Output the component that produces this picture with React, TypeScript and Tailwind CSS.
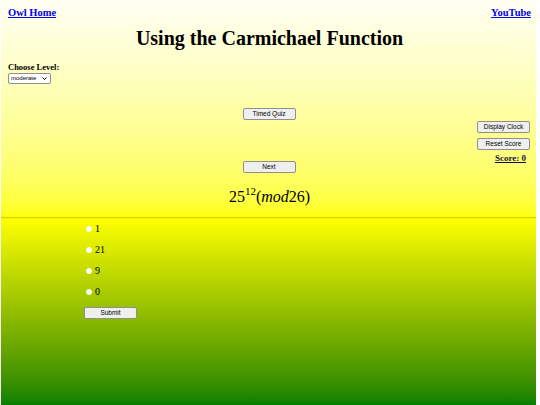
import { useState } from 'react'

const options = ['1', '21', '9', '0']

const serif = 'font-["Liberation_Serif","Times_New_Roman",serif]'

function SmallButton({ label, className = '' }: { label: string; className?: string }) {
  return (
    <button
      type="button"
      className={`block h-[12px] w-[53px] rounded-[2px] border border-[#8f8f8f] bg-[#efefef] font-['Liberation_Sans',Arial,sans-serif] text-[6.5px] leading-none text-black ${className}`}
    >
      {label}
    </button>
  )
}

export default function App() {
  const [level, setLevel] = useState('moderate')
  const [answer, setAnswer] = useState<string | null>(null)

  return (
    <div className="flex h-[405px] w-full bg-white pl-[1px] pr-[4px]">
      <div className={`flex flex-1 flex-col ${serif}`}>
        <section className="h-[217px] bg-gradient-to-b from-[#fffff4] to-[#ffff00] pl-[7px] pr-[5px] pt-[7px]">
          <div className="flex items-center justify-between text-[10.5px] font-bold leading-[12px]">
            <a href="#" className="text-[#0000ee] underline">Owl Home</a>
            <a href="#" className="text-[#0000ee] underline">YouTube</a>
          </div>

          <h1 className="mt-[7px] text-center text-[20px] font-bold leading-[24px] text-black">
            Using the Carmichael Function
          </h1>

          <div className="mt-[11px] text-[8.5px] font-bold leading-[12px] text-black">Choose Level:</div>
          <div className="relative h-[11px] w-[43px]">
            <select
              value={level}
              onChange={event => setLevel(event.target.value)}
              className="block h-[11px] w-[43px] appearance-none rounded-[2px] border border-[#8f8f8f] bg-white py-0 pl-[2px] pr-[10px] font-['Liberation_Sans',Arial,sans-serif] text-[6px] leading-[9px] text-black"
            >
              <option value="easy">easy</option>
              <option value="moderate">moderate</option>
              <option value="hard">hard</option>
            </select>
            <svg
              viewBox="0 0 10 6"
              className="pointer-events-none absolute right-[4px] top-[4px] h-[3px] w-[5px]"
            >
              <path d="M1 1l4 4 4-4" fill="none" stroke="#000" strokeWidth="2" />
            </svg>
          </div>

          <div className="mt-[24px] grid grid-cols-[1fr_auto_1fr]">
            <div />
            <div className="flex flex-col items-center">
              <SmallButton label="Timed Quiz" className="ml-[-1px]" />
              <SmallButton label="Next" className="ml-[-1px] mt-[41px]" />
              <div className="mt-[14px] flex items-start whitespace-nowrap text-[16px] leading-[20px] text-black">
                <span>25</span>
                <span className="mt-[-1px] text-[11px] leading-[11px]">12</span>
                <span>(</span>
                <span className="italic">mod</span>
                <span>26)</span>
              </div>
            </div>
            <div className="mr-[1px] flex flex-col items-end pt-[13px]">
              <SmallButton label="Display Clock" />
              <SmallButton label="Reset Score" className="mt-[5px]" />
              <a href="#" className="mt-[2px] mr-[4px] text-[9px] font-bold leading-[12px] text-[#12124a] underline">
                Score: 0
              </a>
            </div>
          </div>
        </section>

        <div className="h-[2px] border-t border-[#d2d200] bg-[#f4f400]" />

        <section className="flex-1 bg-gradient-to-b from-[#ffff00] to-[#008000] pl-[83px]">
          <div className="mt-[-1px] flex flex-col">
            {options.map(option => (
              <label key={option} className="flex h-[21px] items-center gap-[3px] text-[10px] text-black">
                <span
                  onClick={() => setAnswer(option)}
                  className={`ml-[2px] h-[6px] w-[6px] rounded-full border border-white ${answer === option ? 'bg-blue-600' : 'bg-white'}`}
                />
                {option}
              </label>
            ))}
          </div>
          <SmallButton label="Submit" className="mt-[5px]" />
        </section>
      </div>
    </div>
  )
}
